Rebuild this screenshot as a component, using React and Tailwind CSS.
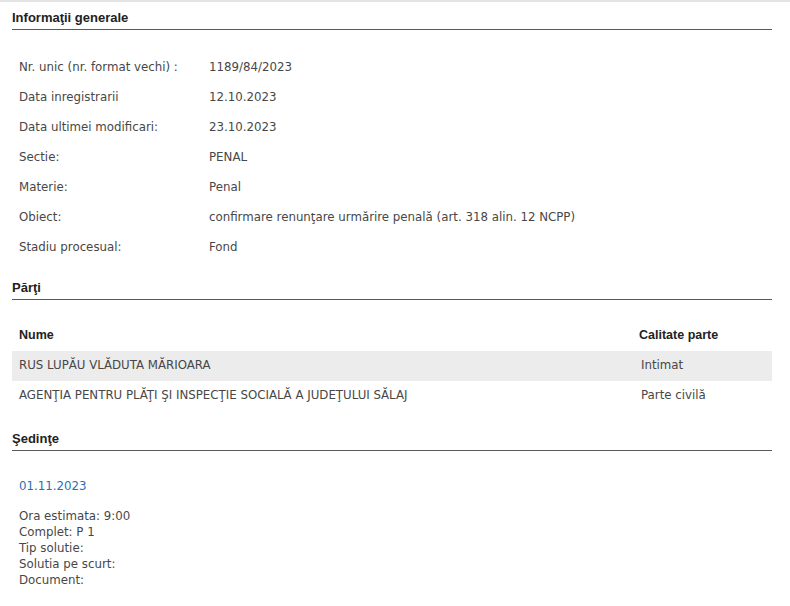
import React from 'react';

const info = [
  ['Nr. unic (nr. format vechi) :', '1189/84/2023'],
  ['Data inregistrarii', '12.10.2023'],
  ['Data ultimei modificari:', '23.10.2023'],
  ['Sectie:', 'PENAL'],
  ['Materie:', 'Penal'],
  ['Obiect:', 'confirmare renunţare urmărire penală (art. 318 alin. 12 NCPP)'],
  ['Stadiu procesual:', 'Fond'],
];

const parti = [
  ['RUS LUPĂU VLĂDUTA MĂRIOARA', 'Intimat'],
  ['AGENŢIA PENTRU PLĂŢI ŞI INSPECŢIE SOCIALĂ A JUDEŢULUI SĂLAJ', 'Parte civilă'],
];

const body = { fontFamily: '"DejaVu Sans", Verdana, sans-serif' };
const head = { fontFamily: '"Liberation Sans", Arial, sans-serif' };

function SectionTitle({ children }) {
  return (
    <div
      style={head}
      className="border-b border-[#5a5a5a] pb-[3px] text-[13px] font-bold leading-[16px] text-[#222]"
    >
      {children}
    </div>
  );
}

export default function App() {
  return (
    <div className="min-h-screen border-t-2 border-[#e4e4e4] bg-white pl-3 pr-[18px] pt-[8px]" style={body}>
      {/* Informatii generale */}
      <SectionTitle>Informaţii generale</SectionTitle>
      <table className="mt-[23px] w-full text-[11.8px] text-[#474747]">
        <tbody>
          {info.map(([k, v]) => (
            <tr key={k} className="h-[30px]">
              <td className="w-[197px] pl-[7px] align-middle">{k}</td>
              <td className="align-middle">{v}</td>
            </tr>
          ))}
        </tbody>
      </table>

      {/* Parti */}
      <div className="mt-[17px]">
        <SectionTitle>Părţi</SectionTitle>
      </div>
      <table className="mt-[19px] w-full text-[11.8px] text-[#474747]">
        <thead>
          <tr className="h-[32px]" style={head}>
            <th className="pl-[7px] text-left text-[12.5px] font-bold text-[#222]">Nume</th>
            <th className="w-[133px] text-left text-[12.5px] font-bold text-[#222]">Calitate parte</th>
          </tr>
        </thead>
        <tbody>
          {parti.map(([n, c], i) => (
            <tr key={n} className={i === 0 ? 'h-[30px] bg-[#ececec]' : 'h-[30px]'}>
              <td className="pl-[7px]">{n}</td>
              <td className="pl-[2px]">{c}</td>
            </tr>
          ))}
        </tbody>
      </table>

      {/* Sedinte */}
      <div className="mt-[20px]">
        <SectionTitle>Şedinţe</SectionTitle>
      </div>
      <div className="pl-[7px] pt-[27px] text-[11.8px] text-[#474747]">
        <div className="leading-[16px] text-[#2a6fb3]">01.11.2023</div>
        <div className="mt-[14px] leading-[16px]">
          <div>Ora estimata: 9:00</div>
          <div>Complet: P 1</div>
          <div>Tip solutie:</div>
          <div>Solutia pe scurt:</div>
          <div>Document:</div>
        </div>
      </div>
    </div>
  );
}
